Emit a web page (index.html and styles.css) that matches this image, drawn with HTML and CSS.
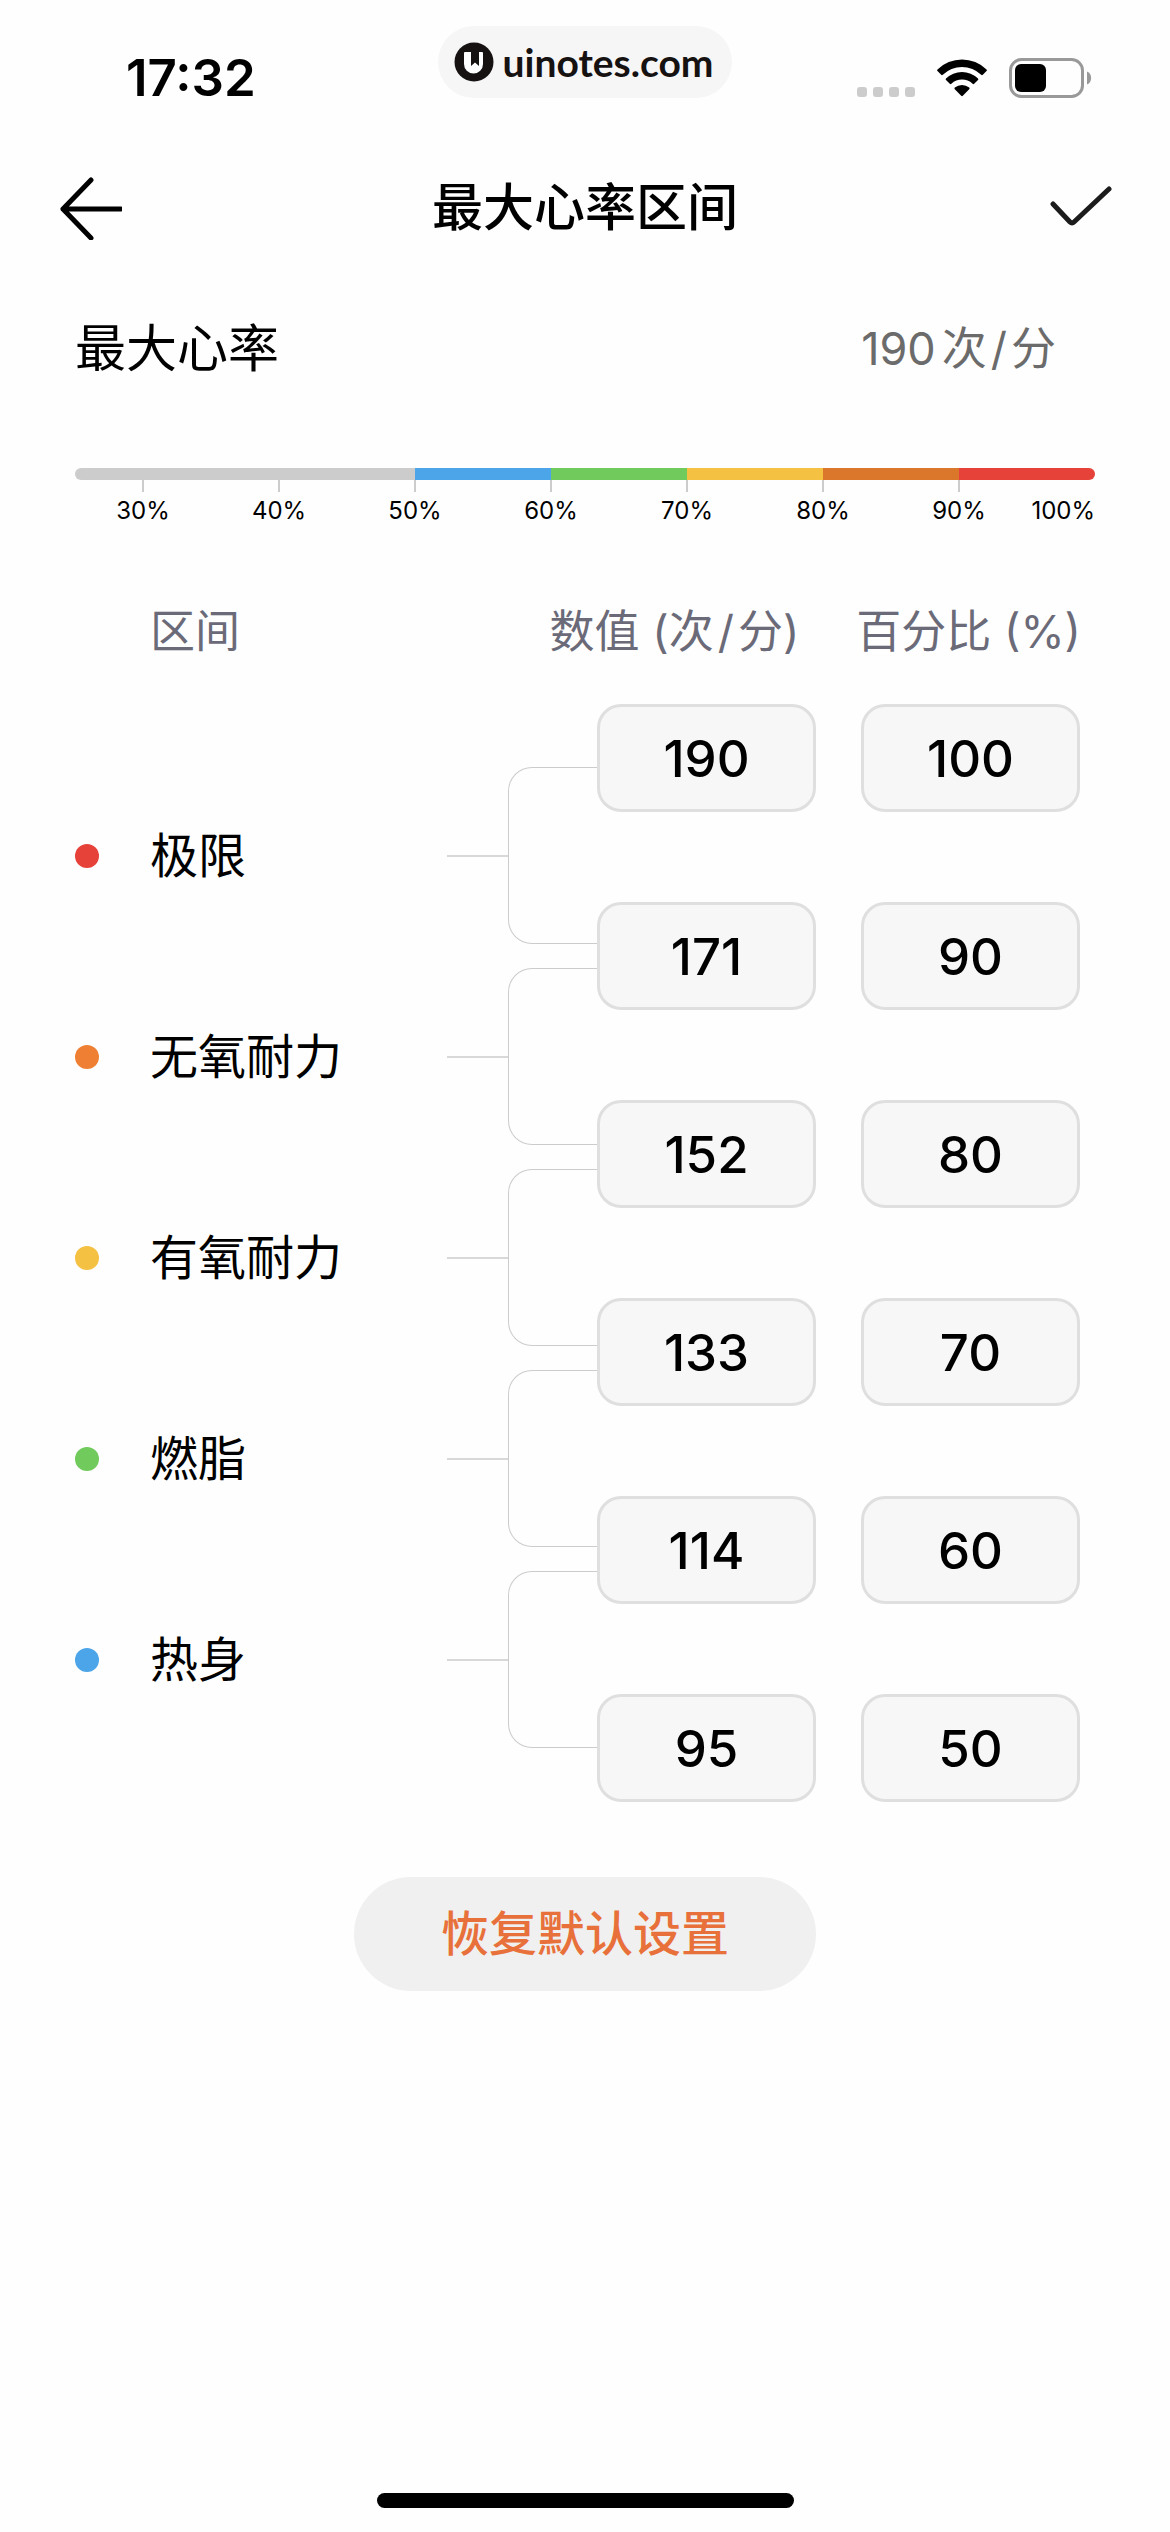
FILE: index.html
```html
<!DOCTYPE html>
<html lang="zh-CN">
<head>
    <meta charset="UTF-8">
    <meta name="viewport" content="width=device-width, initial-scale=1.0">
    <title>最大心率区间</title>
    <link rel="stylesheet" href="styles.css">
</head>
<body>
    <div class="status-bar">
        <span class="time">17:32</span>
        <div class="site-badge">
            <svg width="40" height="40" viewBox="0 0 40 40">
                <circle cx="20" cy="20" r="19.5" fill="#161212"/>
                <path d="M11 10h17q1 0 1 1v11a9.500 9.500 0 0 1-19 0V11q0-1 1-1z" fill="#fff"/>
                <path d="M17 9h8v15l-4-3.500L17 24z" fill="#161212"/>
            </svg>
            <span>uinotes.com</span>
        </div>
        <div class="status-icons">
            <svg width="58" height="38" viewBox="0 0 58 38" fill="#ccc">
                <rect x="0" y="28" width="10" height="10" rx="3"/>
                <rect x="16" y="28" width="10" height="10" rx="3"/>
                <rect x="32" y="28" width="10" height="10" rx="3"/>
                <rect x="48" y="28" width="10" height="10" rx="3"/>
            </svg>
            <svg width="50" height="38" viewBox="0 0 50 38">
                <path d="M0.5 10.500a35 35 0 0 1 49 0q.8.8 0 1.600l-3.700 3.700q-.8.8-1.600 0a27.500 27.500 0 0 0-38.400 0q-.8.8-1.600 0L.5 12.100q-.8-.8 0-1.600z"/>
                <path d="M9 19.500a23 23 0 0 1 32 0q.8.8 0 1.600l-3.800 3.700q-.8.8-1.600 0a15.500 15.500 0 0 0-21.200 0q-.8.8-1.600 0L9 21.100q-.8-.8 0-1.600z"/>
                <path d="M17.800 28.600a11 11 0 0 1 14.400 0q.9.8 0 1.700l-6.400 6.500q-.8.8-1.600 0l-6.400-6.500q-.9-.9 0-1.700z"/>
            </svg>
            <svg width="83" height="40" viewBox="0 0 83 40">
                <rect x="1.500" y="1.500" width="72" height="37" rx="11" fill="none" stroke="#999" stroke-width="3"/>
                <rect x="6" y="6" width="31" height="28" rx="6"/>
                <path d="M78 13.500c5.500 2 5.500 11 0 13z" fill="#999"/>
            </svg>
        </div>
    </div>

    <header class="nav">
        <button class="nav-button" aria-label="返回">
            <svg width="64" height="64" viewBox="0 0 64 64">
                <path d="M33 4L5 33l28 29M5 33h58" stroke="#000"/>
            </svg>
        </button>
        <h1>最大心率区间</h1>
        <button class="nav-button" aria-label="保存">
            <svg width="64" height="64" viewBox="0 0 64 64">
                <path d="M5 28l17 18q2 2 4 0L61 13" stroke="#1c1c1c"/>
            </svg>
        </button>
    </header>

    <main>
        <section class="max-rate">
            <span>最大心率</span>
            <span class="max-rate-value"><span class="number">190</span>次<span class="slash">/</span>分</span>
        </section>

        <section class="scale">
            <div class="scale-bar">
                <span class="rest"></span>
                <span class="blue"></span>
                <span class="green"></span>
                <span class="yellow"></span>
                <span class="dark-orange"></span>
                <span class="red"></span>
            </div>
            <div class="scale-labels">
                <span>30%</span>
                <span>40%</span>
                <span>50%</span>
                <span>60%</span>
                <span>70%</span>
                <span>80%</span>
                <span>90%</span>
                <span>100%</span>
            </div>
        </section>

        <div class="zone-head">
            <span class="head-name">区间</span>
            <span>数值 (次<span class="slash">/</span>分)</span>
            <span>百分比 (%)</span>
        </div>

        <section class="zones">
            <ul class="zone-list">
                <li><i class="dot red"></i><span class="name">极限</span><i class="stem"></i><i class="bracket"></i></li>
                <li><i class="dot orange"></i><span class="name">无氧耐力</span><i class="stem"></i><i class="bracket"></i></li>
                <li><i class="dot yellow"></i><span class="name">有氧耐力</span><i class="stem"></i><i class="bracket"></i></li>
                <li><i class="dot green"></i><span class="name">燃脂</span><i class="stem"></i><i class="bracket"></i></li>
                <li><i class="dot blue"></i><span class="name">热身</span><i class="stem"></i><i class="bracket"></i></li>
            </ul>
            <form class="values" id="zone-form">
                <input type="text" inputmode="numeric" value="190" aria-label="极限上限 次/分">
                <input type="text" inputmode="numeric" value="100" aria-label="极限上限 %">
                <input type="text" inputmode="numeric" value="171" aria-label="极限下限 次/分">
                <input type="text" inputmode="numeric" value="90" aria-label="极限下限 %">
                <input type="text" inputmode="numeric" value="152" aria-label="无氧耐力下限 次/分">
                <input type="text" inputmode="numeric" value="80" aria-label="无氧耐力下限 %">
                <input type="text" inputmode="numeric" value="133" aria-label="有氧耐力下限 次/分">
                <input type="text" inputmode="numeric" value="70" aria-label="有氧耐力下限 %">
                <input type="text" inputmode="numeric" value="114" aria-label="燃脂下限 次/分">
                <input type="text" inputmode="numeric" value="60" aria-label="燃脂下限 %">
                <input type="text" inputmode="numeric" value="95" aria-label="热身下限 次/分">
                <input type="text" inputmode="numeric" value="50" aria-label="热身下限 %">
            </form>
        </section>

        <button class="reset" type="reset" form="zone-form">恢复默认设置</button>
    </main>

    <div class="home-indicator"></div>
</body>
</html>
```
FILE: styles.css
```css
* {
    box-sizing: border-box;
}
body {
    display: flex;
    flex-direction: column;
    min-height: 100vh;
    margin: 0;
    font-family: Inter, "Noto Sans CJK SC", sans-serif;
    background-color: #fefefe;
    color: #000;
}
button {
    padding: 0;
    border: none;
    background: none;
    font-family: inherit;
    cursor: pointer;
}
svg {
    display: block;
}

.status-bar {
    display: grid;
    grid-template-columns: 1fr auto 1fr;
    align-items: start;
    padding-top: 26px;
}
.time {
    padding: 22px 0 0 126px;
    font-size: 51px;
    font-weight: 600;
    line-height: 60px;
}
.site-badge {
    display: flex;
    align-items: center;
    gap: 8px;
    height: 72px;
    padding: 0 18px 0 16px;
    border-radius: 36px;
    background-color: #f6f6f6;
    color: #161212;
    font-family: Lato, sans-serif;
    font-size: 39px;
    font-weight: 700;
    line-height: 48px;
}
.status-icons {
    display: flex;
    justify-content: flex-end;
    align-items: center;
    gap: 22px;
    padding: 32px 78px 0 0;
}

.nav {
    display: flex;
    justify-content: space-between;
    align-items: center;
    padding: 68px 58px 0;
}
.nav h1 {
    margin: 0;
    font-size: 51px;
    font-weight: 500;
    line-height: 64px;
}
.nav-button path {
    fill: none;
    stroke-width: 5;
    stroke-linecap: round;
    stroke-linejoin: round;
}

.max-rate {
    display: flex;
    justify-content: space-between;
    align-items: center;
    padding: 79px 114px 0 75px;
    font-size: 51px;
    line-height: 60px;
}
.max-rate-value {
    color: #6b6b6b;
    font-size: 45px;
}
.number {
    margin-right: 6px;
}
.slash {
    margin: 0 4px;
}

.scale {
    padding: 89px 75px 0;
}
.scale-bar {
    display: flex;
    height: 12px;
    border-radius: 6px;
    overflow: hidden;
}
.scale-bar span {
    flex: 2;
}
.scale-bar .rest {
    flex: 5;
    background-color: #ccc;
}
.scale-labels {
    display: grid;
    grid-template-columns: repeat(7, 2fr) 1fr;
    font-size: 24px;
    line-height: 30px;
    text-align: center;
}
.scale-labels span::before {
    content: "";
    display: block;
    width: 2px;
    height: 12px;
    margin: 0 auto 4px;
    background-color: #ccc;
}
.scale-labels span:last-child {
    text-align: right;
}
.scale-labels span:last-child::before {
    visibility: hidden;
}

.red {
    background-color: #e64239;
}
.dark-orange {
    background-color: #db772a;
}
.orange {
    background-color: #ef8033;
}
.yellow {
    background-color: #f5c143;
}
.green {
    background-color: #70ca5c;
}
.blue {
    background-color: #4ba5e8;
}

.zone-head {
    display: flex;
    gap: 57px;
    padding: 76px 89px 0 150px;
    color: #6b6a78;
    font-size: 45px;
    line-height: 60px;
}
.head-name {
    flex: 1;
}

.zones {
    display: flex;
    padding: 42px 90px 0 75px;
}
.zone-list {
    flex: 1;
    display: flex;
    flex-direction: column;
    gap: 24px;
    margin: 0;
    padding: 63px 0 0;
    list-style: none;
}
.zone-list li {
    display: flex;
    align-items: center;
    height: 177px;
}
.dot {
    width: 24px;
    height: 24px;
    margin-right: 51px;
    border-radius: 50%;
}
.name {
    flex: 1;
    font-size: 48px;
    line-height: 60px;
}
.stem {
    width: 61px;
    height: 2px;
    background-color: #d8d8d8;
}
.bracket {
    width: 89px;
    height: 100%;
    border: 1px solid #ccc;
    border-right: none;
    border-radius: 24px 0 0 24px;
}
.values {
    display: grid;
    grid-template-columns: 219px 219px;
    gap: 90px 45px;
}
.values input {
    width: 100%;
    height: 108px;
    padding: 0;
    border: 3px solid #dfdfdf;
    border-radius: 24px;
    background-color: #f7f7f7;
    color: #000;
    font-family: inherit;
    font-size: 51px;
    font-weight: 500;
    text-align: center;
}

.reset {
    display: block;
    margin: 75px auto 0;
    padding: 27px 87px;
    border-radius: 57px;
    background-color: #f0f0f0;
    color: #e8703a;
    font-size: 48px;
    font-weight: 500;
    line-height: 60px;
}

.home-indicator {
    width: 417px;
    height: 15px;
    margin: auto auto 24px;
    border-radius: 8px;
    background-color: #000;
}
```
